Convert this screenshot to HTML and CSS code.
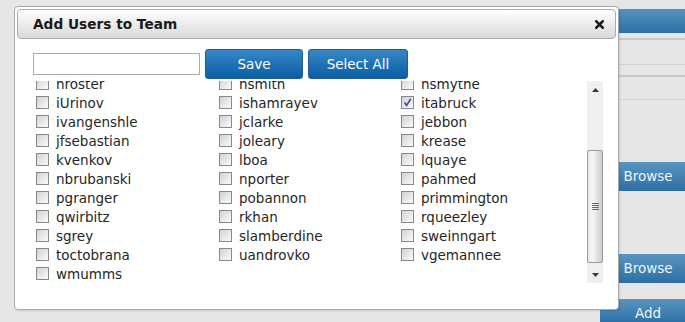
FILE: index.html
```html
<!DOCTYPE html>
<html lang="en">
<head>
  <meta charset="UTF-8">
  <meta name="viewport" content="width=device-width, initial-scale=1.0">
  <link rel="stylesheet" href="styles.css">
</head>
<body>
<div class="page">
  <div class="page-main"></div>
  <div class="side">
    <div class="side-bar"></div>
    <div class="rule rule-a"></div>
    <div class="rule rule-b"></div>
    <div class="rule rule-c"></div>
    <div class="rule rule-d"></div>
    <div class="side-btn browse-1">Browse</div>
    <div class="side-btn browse-2">Browse</div>
    <div class="side-btn add">Add</div>
  </div>
</div>

<div class="dialog">
  <div class="dialog-title">
    <span>Add Users to Team</span>
    <span class="close">
      <svg width="9" height="9" viewBox="0 0 9 9"><path d="M1.3 1.3 L7.7 7.7 M7.7 1.3 L1.3 7.7" stroke="#1a1a1a" stroke-width="2.6" stroke-linecap="square"/></svg>
    </span>
  </div>
  <div class="dialog-body">
    <div class="toolbar">
      <input type="text" class="search">
      <button class="btn btn-save">Save</button>
      <button class="btn btn-all">Select All</button>
    </div>
    <div class="picker">
      <div class="user-list" id="userList">
        <div class="user-grid">
          <label class="user"><span class="box"></span>aallen</label>
          <label class="user"><span class="box"></span>abarnes</label>
          <label class="user"><span class="box"></span>achen</label>
          <label class="user"><span class="box"></span>bcooper</label>
          <label class="user"><span class="box"></span>bdavis</label>
          <label class="user"><span class="box"></span>cevans</label>
          <label class="user"><span class="box"></span>cfoster</label>
          <label class="user"><span class="box"></span>dgarcia</label>
          <label class="user"><span class="box"></span>dhill</label>
          <label class="user"><span class="box"></span>ejones</label>
          <label class="user"><span class="box"></span>fking</label>
          <label class="user"><span class="box"></span>flewis</label>
          <label class="user"><span class="box"></span>gmartin</label>
          <label class="user"><span class="box"></span>gnelson</label>
          <label class="user"><span class="box"></span>hparker</label>
          <label class="user"><span class="box"></span>hroster</label>
          <label class="user"><span class="box"></span>hsmith</label>
          <label class="user"><span class="box"></span>hsmythe</label>
          <label class="user"><span class="box"></span>iUrinov</label>
          <label class="user"><span class="box"></span>ishamrayev</label>
          <label class="user"><span class="box checked"><svg width="11" height="11" viewBox="0 0 11 11"><path d="M2.5 5.5 L4.6 8.4 L8.8 1.8" fill="none" stroke="#46559a" stroke-width="1.7"/></svg></span>itabruck</label>
          <label class="user"><span class="box"></span>ivangenshle</label>
          <label class="user"><span class="box"></span>jclarke</label>
          <label class="user"><span class="box"></span>jebbon</label>
          <label class="user"><span class="box"></span>jfsebastian</label>
          <label class="user"><span class="box"></span>joleary</label>
          <label class="user"><span class="box"></span>krease</label>
          <label class="user"><span class="box"></span>kvenkov</label>
          <label class="user"><span class="box"></span>lboa</label>
          <label class="user"><span class="box"></span>lquaye</label>
          <label class="user"><span class="box"></span>nbrubanski</label>
          <label class="user"><span class="box"></span>nporter</label>
          <label class="user"><span class="box"></span>pahmed</label>
          <label class="user"><span class="box"></span>pgranger</label>
          <label class="user"><span class="box"></span>pobannon</label>
          <label class="user"><span class="box"></span>primmington</label>
          <label class="user"><span class="box"></span>qwirbitz</label>
          <label class="user"><span class="box"></span>rkhan</label>
          <label class="user"><span class="box"></span>rqueezley</label>
          <label class="user"><span class="box"></span>sgrey</label>
          <label class="user"><span class="box"></span>slamberdine</label>
          <label class="user"><span class="box"></span>sweinngart</label>
          <label class="user"><span class="box"></span>toctobrana</label>
          <label class="user"><span class="box"></span>uandrovko</label>
          <label class="user"><span class="box"></span>vgemannee</label>
          <label class="user"><span class="box"></span>wmumms</label>
        </div>
      </div>
      <div class="scrollbar">
        <div class="sb-btn"><svg width="7" height="4" viewBox="0 0 7 4"><path d="M0 4 L3.5 0 L7 4 Z" fill="#3a3a3a"/></svg></div>
        <div class="sb-track">
          <div class="sb-thumb">
            <svg width="7" height="7" viewBox="0 0 7 7"><path d="M0 0.5 H7 M0 2.5 H7 M0 4.5 H7 M0 6.5 H7" stroke="#6a6a6a" stroke-width="1"/></svg>
          </div>
        </div>
        <div class="sb-btn"><svg width="7" height="4" viewBox="0 0 7 4"><path d="M0 0 L7 0 L3.5 4 Z" fill="#3a3a3a"/></svg></div>
      </div>
    </div>
  </div>
</div>
<script>
  document.getElementById('userList').scrollTop = 102;
</script>
</body>
</html>
```

FILE: styles.css
```css
body {
  margin: 0;
  height: 322px;
  overflow: hidden;
  background-color: #e6e6e6;
  font-family: "DejaVu Sans", Verdana, sans-serif;
}

.page {
  display: flex;
}

.page-main {
  width: 600px;
  flex: none;
}

.side {
  width: 96px;
  flex: none;
  padding-top: 9px;
}

.side-bar {
  height: 24px;
  background: linear-gradient(#5592bf, #2c70a7);
}

.rule-a {
  margin-top: 5px;
  border-top: 2px solid #c9c9c9;
}

.rule-b {
  height: 24px;
  border-bottom: 1px solid #d0d0d0;
}

.rule-c {
  height: 10px;
  border-bottom: 2px solid #c9c9c9;
}

.rule-d {
  height: 22px;
  border-bottom: 1px solid #d2d2d2;
}

.side-btn {
  height: 29px;
  line-height: 29px;
  text-align: center;
  font-size: 13.5px;
  color: #eef3f8;
  background: linear-gradient(#5a95c0, #2d6fa5);
}

.browse-1 {
  margin-top: 62px;
}

.browse-2 {
  margin-top: 63px;
}

.add {
  margin-top: 16px;
  height: 24px;
}

.dialog {
  position: absolute;
  left: 14px;
  top: 6px;
  width: 605px;
  height: 304px;
  box-sizing: border-box;
  padding: 2px;
  background-color: #fff;
  border: 1px solid #a8a8a8;
  border-radius: 4px;
  box-shadow: 1px 1px 2px rgba(0,0,0,0.12);
}

.dialog-title {
  height: 30px;
  box-sizing: border-box;
  display: flex;
  align-items: center;
  justify-content: space-between;
  padding: 0 11px 0 15px;
  border: 1px solid #aaa;
  border-radius: 4px;
  background: linear-gradient(#fefefe, #dadada);
  font-size: 13.7px;
  font-weight: bold;
  color: #1a1a1a;
}

.close {
  display: flex;
}

.dialog-body {
  padding: 10px 13px 0 16px;
}

.toolbar {
  display: flex;
  align-items: center;
  gap: 5px;
  height: 30px;
}

.search {
  width: 167px;
  height: 22px;
  box-sizing: border-box;
  border: 1px solid #a9a9a9;
  padding: 2px 4px;
  margin: 0;
  outline: none;
}

.btn {
  height: 30px;
  margin: 0;
  padding: 0;
  border: 1px solid #1e5e93;
  border-radius: 3px;
  background: linear-gradient(#3787c6, #0a5ea5);
  color: #fff;
  font-family: "DejaVu Sans", Verdana, sans-serif;
  font-size: 13.5px;
}

.btn-save {
  width: 98px;
}

.btn-all {
  width: 100px;
}

.picker {
  margin-top: 2px;
  width: 570px;
  height: 202px;
  display: flex;
}

.user-list {
  flex: 1;
  overflow: hidden;
}

.user-grid {
  display: grid;
  grid-template-columns: 183px 182px 1fr;
  padding: 0 0 10px 3px;
}

.user {
  display: flex;
  align-items: center;
  gap: 7px;
  height: 19px;
  font-size: 13.5px;
  color: #262626;
  white-space: nowrap;
}

.box {
  width: 13px;
  height: 13px;
  flex: none;
  box-sizing: border-box;
  border: 1px solid #888;
  background: linear-gradient(135deg, #d2d2d2, #fbfbfb);
  display: flex;
  align-items: center;
  justify-content: center;
}

.scrollbar {
  width: 16px;
  flex: none;
  display: flex;
  flex-direction: column;
  background-color: #f0f0f0;
}

.sb-btn {
  height: 17px;
  display: flex;
  align-items: center;
  justify-content: center;
}

.sb-track {
  flex: 1;
  padding-top: 52px;
}

.sb-thumb {
  height: 113px;
  box-sizing: border-box;
  border: 1px solid #9a9a9a;
  border-radius: 2px;
  background: linear-gradient(to right, #e9e9e9, #f7f7f7 35%, #dcdcdc 75%, #cdcdcd);
  display: flex;
  align-items: center;
  justify-content: center;
}
```
